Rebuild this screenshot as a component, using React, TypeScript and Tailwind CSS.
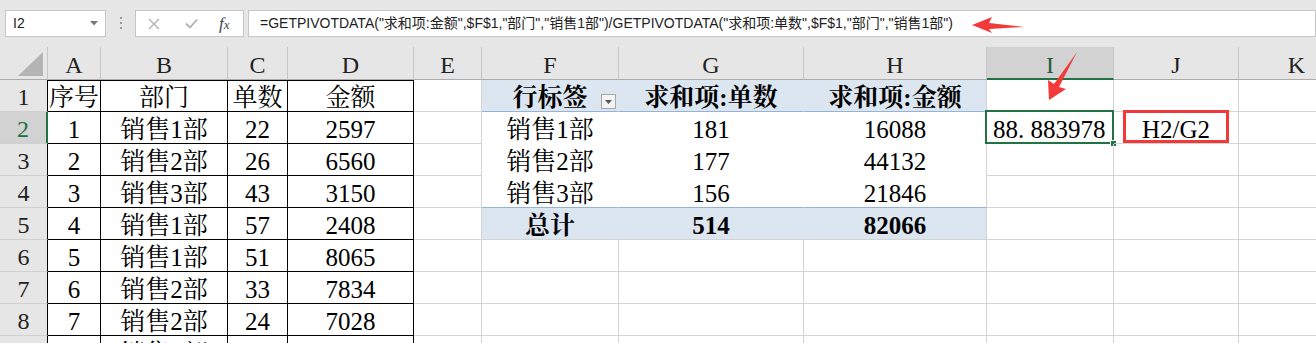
import React from "react";

const COLS = ["A", "B", "C", "D", "E", "F", "G", "H", "I", "J", "K"];

type Row = string[];

const ROWS: Row[] = [
  ["序号", "部门", "单数", "金额", "", "行标签", "求和项:单数", "求和项:金额", "", "", ""],
  ["1", "销售1部", "22", "2597", "", "销售1部", "181", "16088", "88.883978", "H2/G2", ""],
  ["2", "销售2部", "26", "6560", "", "销售2部", "177", "44132", "", "", ""],
  ["3", "销售3部", "43", "3150", "", "销售3部", "156", "21846", "", "", ""],
  ["4", "销售1部", "57", "2408", "", "总计", "514", "82066", "", "", ""],
  ["5", "销售1部", "51", "8065", "", "", "", "", "", "", ""],
  ["6", "销售2部", "33", "7834", "", "", "", "", "", "", ""],
  ["7", "销售2部", "24", "7028", "", "", "", "", "", "", ""],
  ["8", "销售3部", "39", "5280", "", "", "", "", "", "", ""],
];

function cellClass(r: number, c: number) {
  // r: 1-based row, c: 0-based column (A=0)
  const base =
    "relative flex items-center justify-center whitespace-nowrap border-r border-b pt-[3px] text-[25px] leading-none text-black";
  if (c <= 3) {
    return `${base} border-black ${r === 1 ? "border-t" : ""}`;
  }
  if (c >= 5 && c <= 7 && r <= 5) {
    const last = c === 7;
    if (r === 1)
      return `${base} bg-[#dce6f1] font-bold border-b-[#95b3d7] ${last ? "border-r-[#d4d4d4]" : "border-r-[#dce6f1]"}`;
    if (r === 5)
      return `${base} bg-[#dce6f1] font-bold border-b-[#d4d4d4] ${last ? "border-r-[#d4d4d4]" : "border-r-[#dce6f1]"}`;
    return `${base} bg-white ${r === 4 ? "border-b-[#95b3d7]" : "border-b-white"} ${last ? "border-r-[#d4d4d4]" : "border-r-white"}`;
  }
  return `${base} border-[#d4d4d4]`;
}

function FormulaBar() {
  return (
    <div className="flex h-[47px] items-start bg-[#e6e6e6] pt-[10px] [font-family:'Liberation_Sans','Noto_Sans_CJK_SC',sans-serif] text-[14px] text-[#222]">
      <div className="ml-[5px] flex h-[27px] w-[101px] items-center justify-between border border-[#c6c6c6] bg-white pl-[7px] pr-[7px]">
        <span>I2</span>
        <svg width="8" height="5" viewBox="0 0 8 5">
          <path d="M0 0h8L4 4.5z" fill="#7a7a7a" />
        </svg>
      </div>
      <div className="ml-[14px] mt-[7px] flex flex-col gap-[3px]">
        <span className="h-[2px] w-[2px] bg-[#9a9a9a]" />
        <span className="h-[2px] w-[2px] bg-[#9a9a9a]" />
        <span className="h-[2px] w-[2px] bg-[#9a9a9a]" />
      </div>
      <div className="ml-[13px] flex h-[27px] w-[109px] items-center border border-[#c6c6c6] bg-white">
        <svg className="ml-[12px]" width="12" height="12" viewBox="0 0 12 12">
          <path d="M1 1l10 10M11 1L1 11" stroke="#b0b0b0" strokeWidth="1.4" />
        </svg>
        <svg className="ml-[25px]" width="13" height="11" viewBox="0 0 13 11">
          <path d="M1 5.5l4 4L12 1.5" stroke="#b0b0b0" strokeWidth="1.8" fill="none" />
        </svg>
        <span className="ml-[21px] [font-family:'Liberation_Serif',serif] text-[17px] italic text-[#444]">
          f<span className="text-[13px]">x</span>
        </span>
      </div>
      <div className="ml-[4px] flex h-[27px] flex-1 items-center border border-[#c6c6c6] bg-white pl-[11px] whitespace-nowrap">
        =GETPIVOTDATA("求和项:金额",$F$1,"部门","销售1部")/GETPIVOTDATA("求和项:单数",$F$1,"部门","销售1部")
      </div>
    </div>
  );
}

export default function App() {
  return (
    <div className="relative h-[343px] w-[1316px] overflow-hidden bg-white">
      <FormulaBar />

      <div className="grid grid-cols-[48px_53px_127px_60px_126px_68px_137px_185px_183px_127px_125px_116px] grid-rows-[33px_repeat(9,32px)] [font-family:'Liberation_Serif','Noto_Serif_CJK_SC','Noto_Sans_CJK_SC',serif]">
        {/* corner */}
        <div className="flex items-end justify-end border-r border-b border-r-[#c6c6c6] border-b-[#ababab] bg-[#e6e6e6] pb-[3px] pr-[4px]">
          <svg width="25" height="24" viewBox="0 0 25 24">
            <path d="M25 0V24H0z" fill="#b4b4b4" />
          </svg>
        </div>
        {COLS.map((c) =>
          c === "I" ? (
            <div
              key={c}
              className="flex items-center justify-center border-r border-b-2 border-r-[#c6c6c6] border-b-[#217346] bg-[#d2d2d2] pt-[4px] text-[24px] text-[#1f5e3c]"
            >
              {c}
            </div>
          ) : (
            <div
              key={c}
              className="flex items-center justify-center border-r border-b border-r-[#c6c6c6] border-b-[#ababab] bg-[#e6e6e6] pt-[3px] text-[24px] text-[#222]"
            >
              {c}
            </div>
          )
        )}

        {ROWS.map((row, i) => {
          const r = i + 1;
          return (
            <React.Fragment key={r}>
              {r === 2 ? (
                <div className="flex items-center justify-center border-b border-r-2 border-b-[#d0d0d0] border-r-[#217346] bg-[#d2d2d2] pt-[3px] text-[24px] text-[#217346]">
                  {r}
                </div>
              ) : (
                <div className="flex items-center justify-center border-b border-r border-b-[#d0d0d0] border-r-black bg-[#e6e6e6] pt-[3px] text-[24px] text-[#222]">
                  {r}
                </div>
              )}
              {row.map((v, c) => {
                if (r === 1 && c === 5) {
                  return (
                    <div key={c} className={cellClass(r, c)}>
                      {v}
                      <span className="absolute right-[2px] top-[14px] flex h-[15px] w-[15px] items-center justify-center border border-[#a6a6a6] bg-[#f4f4f4]">
                        <svg width="7" height="4" viewBox="0 0 7 4">
                          <path d="M0 0h7L3.5 4z" fill="#555" />
                        </svg>
                      </span>
                    </div>
                  );
                }
                if (r === 2 && c === 8) {
                  return (
                    <div key={c} className={`${cellClass(r, c)} justify-start pl-[6px]`}>
                      88<span className="inline-block w-[12.5px]">.</span>883978
                      <div className="absolute -left-[2px] -top-[2px] h-[34px] w-[129px] border-2 border-[#217346]" />
                      <div className="absolute -bottom-[4px] -right-[4px] h-[7px] w-[7px] border border-white bg-[#217346]" />
                    </div>
                  );
                }
                if (r === 2 && c === 9) {
                  return (
                    <div key={c} className={cellClass(r, c)}>
                      {v}
                      <div className="absolute bottom-[0px] left-[9px] right-[9px] top-[-2px] border-[3px] border-[#f03a3a]" />
                    </div>
                  );
                }
                return (
                  <div key={c} className={cellClass(r, c)}>
                    {v}
                  </div>
                );
              })}
            </React.Fragment>
          );
        })}
      </div>

      {/* annotation arrows */}
      <svg
        className="pointer-events-none absolute left-0 top-0"
        width="1316"
        height="343"
        viewBox="0 0 1316 343"
      >
        <polygon points="972,25 992,17 989,23 1024,27 989,29 992,33" fill="#f23a3a" />
        <polygon points="1049,100 1048,80 1054,84 1077,52 1059,87 1066,89" fill="#f23a3a" />
      </svg>
    </div>
  );
}
